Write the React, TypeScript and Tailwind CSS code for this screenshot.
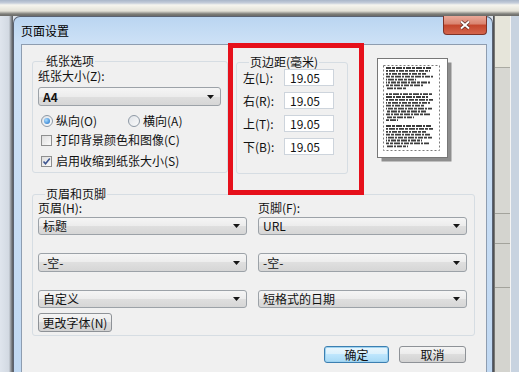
import React from "react";

const paperLines = [46, 44, 40, 47, 30, 45, 38, 20, 0, 46, 42, 47, 44, 39, 46, 41, 45, 28, 12, 0, 45, 47, 40, 44, 46, 36, 43, 22];

function Arrow() {
  return (
    <svg width="7" height="4" viewBox="0 0 7 4" className="shrink-0">
      <path d="M0 0h7L3.5 4z" fill="#161616" />
    </svg>
  );
}

function Select({ value, className }: { value: string; className: string }) {
  return (
    <div
      className={`flex items-center justify-between rounded-[3px] border border-[#9ca2a8] bg-[linear-gradient(#f5f5f5,#ececec_50%,#dfdfdf_50%,#d6d6d6)] pl-[4px] pr-[6px] text-[12px] leading-none text-[#111] ${className}`}
    >
      <span>{value}</span>
      <Arrow />
    </div>
  );
}

function Radio({ checked }: { checked?: boolean }) {
  return (
    <span className="flex h-[12px] w-[12px] shrink-0 items-center justify-center rounded-full border border-[#8e99a5] bg-[linear-gradient(135deg,#dfe3e8,#fbfbfb)]">
      {checked && <span className="h-[6px] w-[6px] rounded-full bg-[radial-gradient(circle_at_35%_35%,#a8dcff,#1b6cc4)]" />}
    </span>
  );
}

function Checkbox({ checked }: { checked?: boolean }) {
  return (
    <span className="flex h-[11px] w-[11px] shrink-0 items-center justify-center border border-[#8e8f8f] bg-[linear-gradient(135deg,#dedede,#fbfbfb)]">
      {checked && (
        <svg width="9" height="9" viewBox="0 0 9 9">
          <path d="M1.5 4.5l2 2.2L7.8 1.6" fill="none" stroke="#3d5590" strokeWidth="1.6" />
        </svg>
      )}
    </span>
  );
}

function MarginRow({ label }: { label: string }) {
  return (
    <div className="flex h-[17px] items-center">
      <span className="w-[41px] text-[12px] leading-none">{label}</span>
      <div className="flex h-[17px] w-[50px] items-center border border-[#cdd4dc] bg-white pl-[5px] text-[12px] leading-none">
        19.05
      </div>
    </div>
  );
}

function PaperPreview() {
  return (
    <svg width="76" height="104" viewBox="0 0 76 104">
      <rect x="4.5" y="4.5" width="70" height="99" fill="#8e8e8e" />
      <rect x="0.5" y="0.5" width="70" height="99" fill="#fff" stroke="#777" />
      <rect x="6.5" y="7.5" width="56" height="85" fill="none" stroke="#7a7a7a" strokeDasharray="2 2" />
      {paperLines.map((w, i) =>
        w ? (
          <line
            key={i}
            x1="9"
            x2={9 + w}
            y1={10 + i * 2.9}
            y2={10 + i * 2.9}
            stroke="#3c3c3c"
            strokeWidth="1.8"
            strokeDasharray="5 1 3 1 6 1 2 1"
            strokeDashoffset={(i * 7) % 20}
          />
        ) : null,
      )}
    </svg>
  );
}

export default function App() {
  return (
    <div className="relative flex h-[372px] w-[519px] flex-col overflow-hidden bg-[#dde4ec] font-['Noto_Sans_CJK_SC',sans-serif] text-[#111]">
      <div className="h-[16px] shrink-0 bg-[linear-gradient(#a8b5c8,#c6cedb_3px,#f6f5ef_5px,#e3e1d7_11px,#7d7d79_14px,#6a6a67)]" />
      <div className="flex flex-1">
        <div className="w-[13px] shrink-0 bg-[linear-gradient(90deg,#dfe5ed,#d2d9e2_9px,#8c9096_11px,#56595d)]" />

        {/* dialog window */}
        <div className="flex w-[480px] shrink-0 flex-col rounded-t-[7px] border border-b-0 border-[#5a6272] bg-[linear-gradient(#bad5f1,#cde1f6_26px,#c0d8f2)]">
          <div className="flex h-[27px] shrink-0 items-center justify-between pl-[7px]">
            <span className="text-[12px] leading-none text-black">页面设置</span>
            <div className="-mt-[1px] mr-[5px] flex h-[19px] w-[44px] items-center justify-center self-start rounded-b-[4px] border border-t-0 border-[#7d3328] bg-[linear-gradient(#eaa999,#d98370_45%,#c4452c_50%,#d4654c)]">
              <svg width="12" height="10" viewBox="0 0 12 10">
                <path d="M2 1.5l8 7M10 1.5l-8 7" stroke="#5a2a22" strokeWidth="3.4" />
                <path d="M2 1.5l8 7M10 1.5l-8 7" stroke="#fff" strokeWidth="2" />
              </svg>
            </div>
          </div>

          <div className="ml-[7px] mr-[5px] h-[340px] border border-[#8e9db0] bg-[#f0f0f0]">
            {/* top row */}
            <div className="flex h-[131px] items-start pt-[9px]">
              <fieldset className="ml-[10px] w-[196px] rounded-[3px] border border-[#d6dde3] pb-[4px] pl-[5px]">
                <legend className="ml-[7px] px-[1px] text-[12px] leading-[14px]">纸张选项</legend>
                <div className="mt-[1px] h-[14px] text-[12px] leading-[14px]">纸张大小(Z):</div>
                <Select value="A4" className="mt-[4px] h-[19px] w-[183px] font-bold text-[11px]" />
                <div className="mt-[8px] flex h-[14px] items-center text-[12px] leading-none">
                  <span className="ml-[3px] flex items-center gap-[3px]">
                    <Radio checked />
                    纵向(O)
                  </span>
                  <span className="ml-[31px] flex items-center gap-[3px]">
                    <Radio />
                    横向(A)
                  </span>
                </div>
                <div className="mt-[5px] flex h-[14px] items-center gap-[4px] pl-[3px] text-[12px] leading-none">
                  <Checkbox />
                  打印背景颜色和图像(C)
                </div>
                <div className="mt-[7px] flex h-[14px] items-center gap-[4px] whitespace-nowrap pl-[3px] text-[12px] leading-none">
                  <Checkbox checked />
                  启用收缩到纸张大小(S)
                </div>
              </fieldset>

              <fieldset className="ml-[8px] mt-[1px] w-[112px] rounded-[3px] border border-[#d6dde3] pb-[18px] pl-[6px]">
                <legend className="ml-[6px] px-[1px] text-[12px] leading-[14px]">页边距(毫米)</legend>
                <div className="flex flex-col gap-[6px]">
                  <MarginRow label="左(L):" />
                  <MarginRow label="右(R):" />
                  <MarginRow label="上(T):" />
                  <MarginRow label="下(B):" />
                </div>
              </fieldset>

              <div className="ml-[29px] mt-[4px]">
                <PaperPreview />
              </div>
            </div>

            {/* header / footer */}
            <fieldset className="ml-[10px] mt-[11px] w-[443px] rounded-[3px] border border-[#d6dde3] pb-[3px] pl-[5px] pr-[7px]">
              <legend className="ml-[7px] px-[1px] text-[12px] leading-[14px]">页眉和页脚</legend>
              <div className="flex gap-[11px]">
                <div className="flex w-[209px] flex-col">
                  <div className="h-[14px] text-[12px] leading-[14px]">页眉(H):</div>
                  <Select value="标题" className="mt-[2px] h-[18px] w-full" />
                  <Select value="-空-" className="mt-[18px] h-[19px] w-full" />
                  <Select value="自定义" className="mt-[18px] h-[18px] w-full" />
                  <button className="mt-[5px] flex h-[19px] w-[74px] items-center justify-center rounded-[3px] border border-[#8e9297] bg-[linear-gradient(#f4f4f4,#ebebeb_50%,#dddddd_50%,#d2d2d2)] text-[12px] leading-none">
                    更改字体(N)
                  </button>
                </div>
                <div className="flex w-[209px] flex-col">
                  <div className="h-[14px] text-[12px] leading-[14px]">页脚(F):</div>
                  <Select value="URL" className="mt-[2px] h-[18px] w-full" />
                  <Select value="-空-" className="mt-[18px] h-[19px] w-full" />
                  <Select value="短格式的日期" className="mt-[18px] h-[18px] w-full" />
                </div>
              </div>
            </fieldset>

            <div className="mt-[10px] flex justify-end gap-[10px] pr-[20px]">
              <button className="flex h-[17px] w-[65px] items-center justify-center rounded-[3px] border border-[#3c7fb1] bg-[linear-gradient(#eaf6fd,#d9f0fc_50%,#bee6fd_50%,#a7d9f5)] text-[12px] leading-none shadow-[inset_0_0_0_1px_#9fd3f0]">
                确定
              </button>
              <button className="flex h-[17px] w-[67px] items-center justify-center rounded-[3px] border border-[#8e9297] bg-[linear-gradient(#f4f4f4,#ebebeb_50%,#dddddd_50%,#d2d2d2)] text-[12px] leading-none">
                取消
              </button>
            </div>
          </div>
        </div>

        {/* desktop to the right */}
        <div className="flex flex-1">
          <div className="w-[2px] bg-[linear-gradient(90deg,#3e4044,#8a8a86)]" />
          <div className="flex w-[15px] flex-col">
            <div className="h-[51px] bg-[#e6e5da]" />
            <div className="h-[146px] border-t border-[#aaaaa2] bg-[#d7d7d2]" />
            <div className="h-[30px] border-t border-[#a3a39c] bg-[#d4d4cf]" />
            <div className="h-[44px] border-t border-[#a3a39c] bg-[#d4d4cf]" />
            <div className="flex-1 border-t border-[#a3a39c] bg-[#d4d4cf]" />
          </div>
          <div className="w-[1px] bg-[#f4f4f4]" />
          <div className="flex-1 bg-[#c8d3e0]" />
        </div>
      </div>

      {/* red annotation */}
      <div className="absolute left-[228px] top-[43px] h-[152px] w-[136px] border-[5px] border-[#e6101b]" />
    </div>
  );
}
